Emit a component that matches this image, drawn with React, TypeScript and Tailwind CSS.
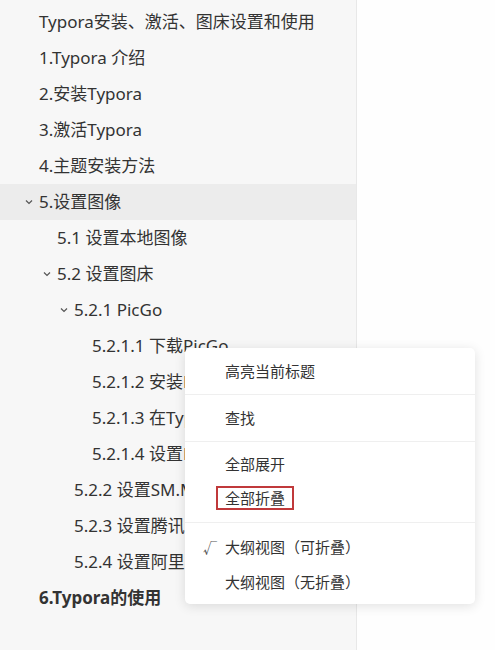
import React from "react";

type Row = { text: string; level: number; chevron?: boolean; active?: boolean; bold?: boolean };

const rows: Row[] = [
  { text: "Typora安装、激活、图床设置和使用", level: 0 },
  { text: "1.Typora 介绍", level: 0 },
  { text: "2.安装Typora", level: 0 },
  { text: "3.激活Typora", level: 0 },
  { text: "4.主题安装方法", level: 0 },
  { text: "5.设置图像", level: 0, chevron: true, active: true },
  { text: "5.1 设置本地图像", level: 1 },
  { text: "5.2 设置图床", level: 1, chevron: true },
  { text: "5.2.1 PicGo", level: 2, chevron: true },
  { text: "5.2.1.1 下载PicGo", level: 3 },
  { text: "5.2.1.2 安装PicGo", level: 3 },
  { text: "5.2.1.3 在Typora中设置", level: 3 },
  { text: "5.2.1.4 设置PicGo", level: 3 },
  { text: "5.2.2 设置SM.MS图床", level: 2 },
  { text: "5.2.3 设置腾讯云图床", level: 2 },
  { text: "5.2.4 设置阿里云图床", level: 2 },
  { text: "6.Typora的使用", level: 0, bold: true },
];

const padClass = ["pl-[39px]", "pl-[57px]", "pl-[74px]", "pl-[92px]"];

function Chevron() {
  return (
    <svg width="8" height="6" viewBox="0 0 8 6" className="absolute -left-[14px] top-1/2 -translate-y-1/2">
      <path d="M1 1.5 L4 4.5 L7 1.5" fill="none" stroke="#555" strokeWidth="1.2" />
    </svg>
  );
}

export default function App() {
  return (
    <div
      className="relative w-[495px] h-[650px] flex bg-white overflow-hidden"
      style={{ fontFamily: '"Noto Sans", "Noto Sans CJK SC", sans-serif' }}
    >
      <div className="w-[357px] h-full bg-[#f7f7f7] border-r border-[#e8e8e8] pt-[4px]">
        {rows.map((r, i) => (
          <div
            key={i}
            className={`h-[36px] flex items-center whitespace-nowrap overflow-hidden text-[17px] text-[#333] ${padClass[r.level]} ${r.active ? "bg-[#ececec]" : ""} ${r.bold ? "font-bold" : ""}`}
          >
            <span className="relative">
              {r.chevron && <Chevron />}
              {r.text}
            </span>
          </div>
        ))}
      </div>
      <div className="flex-1 bg-[#fefefe]" />

      <div className="absolute left-[185px] top-[348px] w-[290px] bg-white rounded-[5px] shadow-[0_2px_12px_rgba(0,0,0,0.12)] text-[15px] text-[#333]">
        <div className="h-[46px] flex items-center pl-[40px]">高亮当前标题</div>
        <div className="h-px bg-[#efefef]" />
        <div className="h-[46px] flex items-center pl-[40px]">查找</div>
        <div className="h-px bg-[#efefef]" />
        <div className="pt-[6px] pb-[6px]">
          <div className="h-[32px] flex items-center pl-[40px]">全部展开</div>
          <div className="h-[36px] flex items-center pl-[31px]">
            <span className="border-2 border-[#c0393b] px-[7px] leading-[18px] py-[1px]">全部折叠</span>
          </div>
        </div>
        <div className="h-px bg-[#efefef]" />
        <div className="pt-[6px] pb-[5px]">
          <div className="h-[36px] flex items-center pl-[40px] relative">
            <span className="absolute left-[18px] text-[#555] text-[14px]">√</span>
            大纲视图（可折叠）
          </div>
          <div className="h-[34px] flex items-center pl-[40px]">大纲视图（无折叠）</div>
        </div>
      </div>
    </div>
  );
}
